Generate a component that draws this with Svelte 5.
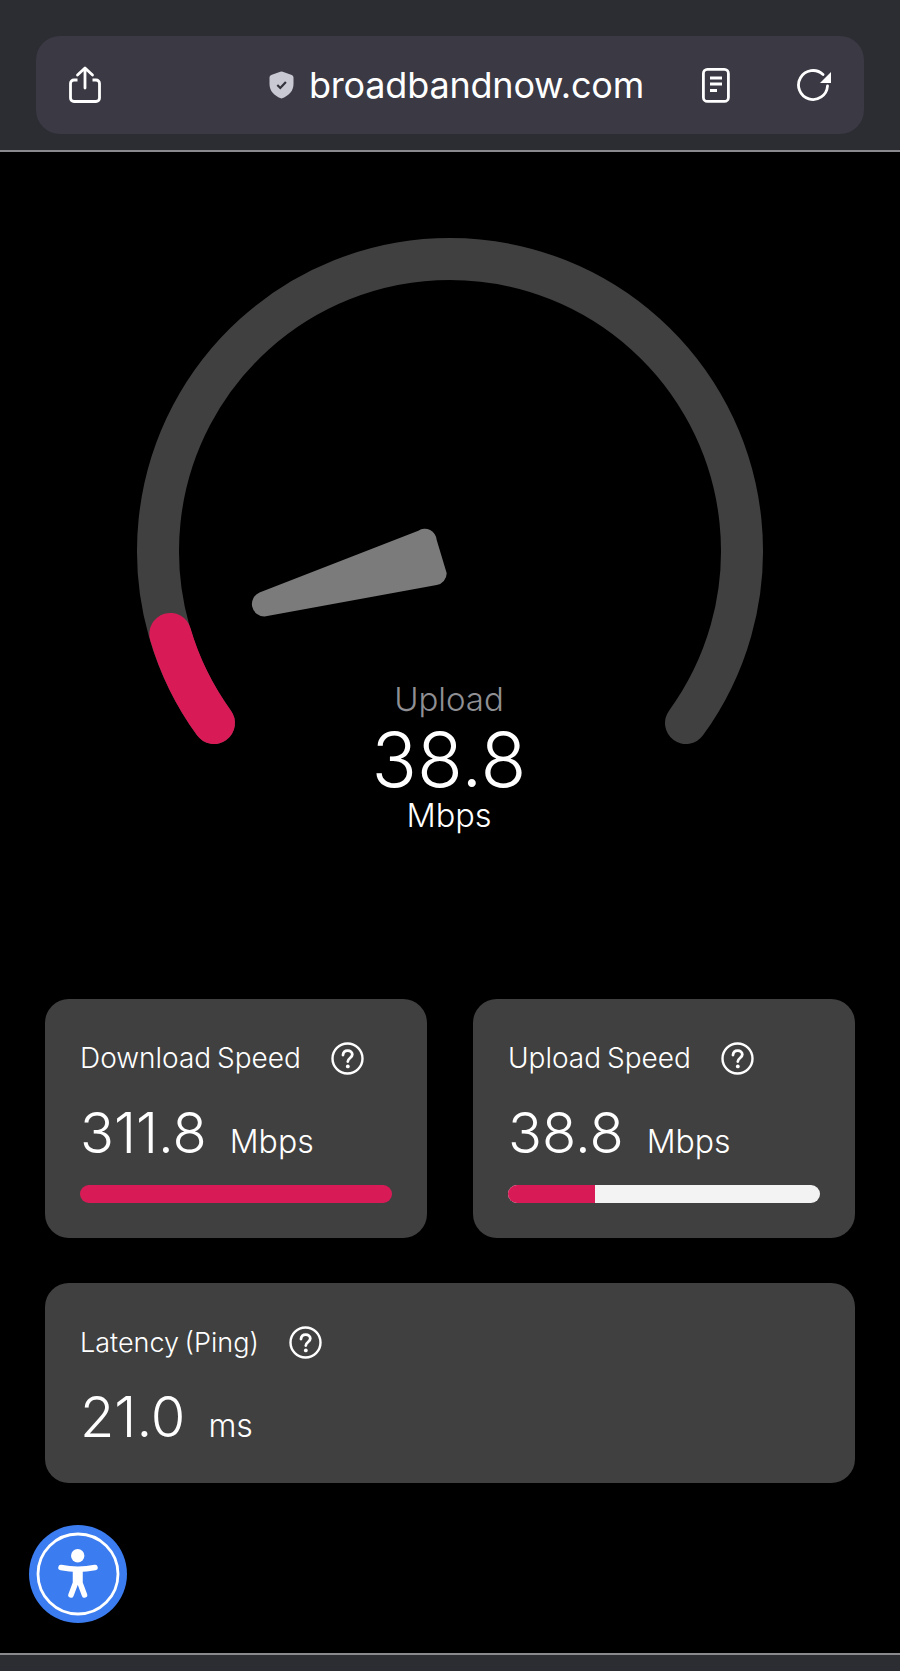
<script>
  let cards = [
    { title: 'Download Speed', value: '311.8', unit: 'Mbps', pct: 100 },
    { title: 'Upload Speed', value: '38.8', unit: 'Mbps', pct: 28 },
  ];
</script>

{#snippet help()}
  <svg class="help" viewBox="0 0 33 33" width="33" height="33" aria-hidden="true">
    <circle cx="16.5" cy="16.5" r="15" fill="none" stroke="#fff" stroke-width="2.4" />
    <path d="M12 13c.2-2.700 2.100-4.300 4.700-4.300 2.700 0 4.600 1.600 4.600 3.900 0 3.300-4.300 3.500-4.500 6.900" fill="none" stroke="#fff" stroke-width="2.800" stroke-linecap="round" />
    <circle cx="16.800" cy="24.400" r="1.900" fill="#fff" />
  </svg>
{/snippet}

<div class="page">
  <header class="browser">
    <div class="urlbar">
      <svg class="share" viewBox="0 0 32 37" width="32" height="37" aria-hidden="true">
        <path d="M8.500 14H5C3 14 1.500 15.500 1.500 17.500v14.500c0 2 1.500 3.500 3.500 3.500h22c2 0 3.500-1.500 3.500-3.500V17.500c0-2-1.500-3.500-3.500-3.500H23.500" fill="none" stroke="#fff" stroke-width="2.800" />
        <path d="M16 22V2.500M8.500 9 16 2l7.500 7" fill="none" stroke="#fff" stroke-width="2.800" stroke-linecap="round" stroke-linejoin="round" />
      </svg>
      <div class="address">
        <svg viewBox="0 0 25 28" width="25" height="28" aria-hidden="true">
          <path d="M11.300 0.800Q12.500 0.300 13.700 0.800L22.800 4Q24.500 4.700 24.500 6.500V13c0 7-4.500 11.800-12 14.500C5 24.800 0.500 20 0.500 13V6.500Q0.500 4.700 2.200 4Z" fill="#c9c9d4" />
          <path d="M8.300 14l3 3 5.600-6" fill="none" stroke="#33333b" stroke-width="2.200" />
        </svg>
        <span>broadbandnow.com</span>
      </div>
      <div class="tools">
        <svg viewBox="0 0 28 35" width="28" height="35" aria-hidden="true">
          <rect x="1.400" y="1.400" width="25" height="32" rx="4" fill="none" stroke="#fff" stroke-width="2.800" />
          <path d="M8 10h12M8 16h12M8 22.500h7" fill="none" stroke="#fff" stroke-width="2.800" />
        </svg>
        <svg viewBox="0 0 34 32" width="34" height="32" aria-hidden="true">
          <path d="M30.500 17A14.500 14.500 0 1 1 26 5.500" fill="none" stroke="#fff" stroke-width="2.800" stroke-linecap="round" />
          <path d="M34 3 34 14 23 14Z" fill="#fff" />
        </svg>
      </div>
    </div>
  </header>

  <main>
    <section class="gauge">
      <svg viewBox="0 200 900 560" width="900" height="560" aria-hidden="true">
        <path d="M214 723A292 292 0 1 1 686 723" fill="none" stroke="#404040" stroke-width="42" stroke-linecap="round" />
        <path d="M214 723A292 292 0 0 1 170.300 634" fill="none" stroke="#d81b57" stroke-width="42" stroke-linecap="round" />
        <path d="M259.500 592.500 418.300 530.700A12 12 0 0 1 436.700 540L446.700 573.300A12 12 0 0 1 436.700 585L264.500 616.500A12.500 12.500 0 0 1 259.500 592.500Z" fill="#7b7b7b" />
      </svg>
      <div class="readout">
        <div class="label">Upload</div>
        <div class="speed">38.8</div>
        <div class="unit">Mbps</div>
      </div>
    </section>

    <section class="cards">
      {#each cards as card}
        <div class="card">
          <div class="title"><span>{card.title}</span>{@render help()}</div>
          <div class="value"><span class="num">{card.value}</span><span class="measure">{card.unit}</span></div>
          <div class="bar"><div class="fill" style="width: {card.pct}%"></div></div>
        </div>
      {/each}
      <div class="card wide">
        <div class="title"><span>Latency (Ping)</span>{@render help()}</div>
        <div class="value"><span class="num">21.0</span><span class="measure">ms</span></div>
      </div>
    </section>

    <button class="a11y" aria-label="Accessibility">
      <svg viewBox="0 0 98 98" width="98" height="98" aria-hidden="true">
        <circle cx="49" cy="49" r="49" fill="#3b7cf0" />
        <circle cx="49" cy="49" r="40" fill="none" stroke="#fff" stroke-width="2.800" />
        <circle cx="48.700" cy="30.700" r="6.700" fill="#fff" />
        <path d="M32 42.500Q49 46 66 42.500" fill="none" stroke="#fff" stroke-width="5.500" stroke-linecap="round" />
        <path d="M46.500 46V58L42 70M51 46V58L55.500 70" fill="none" stroke="#fff" stroke-width="5.500" stroke-linecap="round" stroke-linejoin="round" />
      </svg>
    </button>
  </main>

  <footer class="toolbar"></footer>
</div>

<style>
  :global(body) {
    background: #000;
  }

  .page {
    width: 900px;
    height: 1671px;
    display: flex;
    flex-direction: column;
    background: #000;
    color: #fff;
    font-family: "Inter", "Liberation Sans", sans-serif;
    font-weight: 300;
  }

  .browser {
    height: 152px;
    padding: 36px 36px 0;
    box-sizing: border-box;
    background: #2c2c33;
    border-bottom: 2px solid #8a8a8e;
  }

  .urlbar {
    height: 98px;
    display: flex;
    align-items: center;
    padding: 0 33px;
    background: #3a3944;
    border-radius: 24px;
  }

  .share {
    margin-top: -1px;
  }

  .address {
    display: flex;
    align-items: center;
    gap: 15px;
    margin-left: 168px;
    font-weight: 400;
    font-size: 36px;
    letter-spacing: -0.2px;
  }

  .tools {
    display: flex;
    align-items: center;
    gap: 67px;
    margin-left: auto;
  }

  main {
    flex: 1;
    display: flex;
    flex-direction: column;
  }

  .gauge {
    position: relative;
    height: 847px;
    padding-top: 48px;
    box-sizing: border-box;
  }

  .gauge svg {
    display: block;
  }

  .readout {
    position: absolute;
    left: 0;
    right: 0;
    top: 527px;
    padding-right: 2px;
    text-align: center;
  }

  .label {
    font-size: 33px;
    line-height: 40px;
    color: #8f8f94;
  }

  .speed {
    font-size: 75px;
    line-height: 72px;
    margin-top: 5px;
  }

  .unit {
    font-size: 32.5px;
    line-height: 40px;
  }

  .cards {
    display: grid;
    grid-template-columns: 382px 382px;
    column-gap: 46px;
    row-gap: 45px;
    padding: 0 45px;
  }

  .card {
    height: 239px;
    box-sizing: border-box;
    padding: 41px 35px 0 35px;
    background: #404040;
    border-radius: 24px;
  }

  .wide {
    grid-column: 1 / -1;
    height: 200px;
  }

  .title {
    display: flex;
    align-items: center;
    gap: 30px;
    height: 36px;
    font-size: 28px;
    word-spacing: -2px;
  }

  .wide .title {
    font-size: 27px;
  }

  .value {
    display: flex;
    align-items: baseline;
    gap: 23px;
    margin-top: 22px;
    height: 70px;
  }

  .num {
    font-size: 56px;
    line-height: 70px;
  }

  .measure {
    font-size: 32px;
  }

  .bar {
    height: 18px;
    margin-top: 17px;
    background: #f3f3f3;
    border-radius: 9px;
    overflow: hidden;
  }

  .fill {
    height: 100%;
    background: #d81b57;
  }

  .a11y {
    align-self: flex-start;
    margin: 42px 0 0 29px;
    padding: 0;
    width: 98px;
    height: 98px;
    border: none;
    background: none;
  }

  .a11y svg {
    display: block;
  }

  .toolbar {
    height: 18px;
    box-sizing: border-box;
    background: #2c2c33;
    border-top: 2px solid #8a8a8e;
  }
</style>
